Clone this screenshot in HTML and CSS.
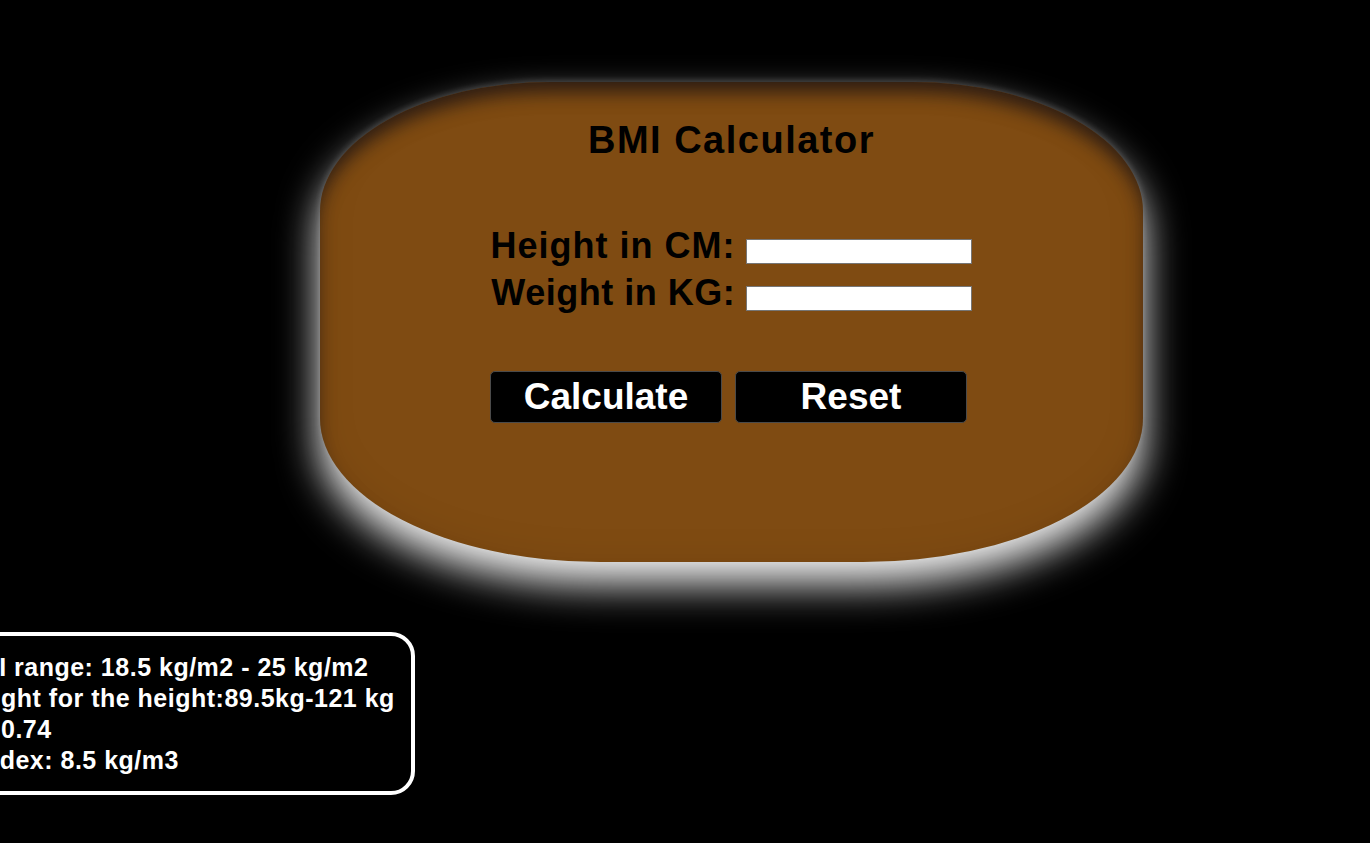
FILE: index.html
```html
<!DOCTYPE html>
<html lang="en">
<head>
    <meta charset="UTF-8">
    <meta name="viewport" content="width=device-width, initial-scale=1.0">
    <title>BMI Calculator</title>
    <link rel="stylesheet" href="styles.css">
</head>
<body>
    <div class="card">
        <h1>BMI Calculator</h1>
        <form id="bmiForm">
            <div class="row">
                <label for="height">Height in CM:</label>
                <input type="number" id="height">
            </div>
            <div class="row row-weight">
                <label for="weight">Weight in KG:</label>
                <input type="number" id="weight">
            </div>
            <div class="buttons">
                <button type="button" id="calculate">Calculate</button>
                <button type="reset" id="reset">Reset</button>
            </div>
        </form>
    </div>

    <div class="result" id="result">
        <div>Healthy BMI range: 18.5 kg/m2 - 25 kg/m2</div>
        <div>Healthy weight for the height:89.5kg-121 kg</div>
        <div>BMI Prime: 0.74</div>
        <div>Ponderal Index: 8.5 kg/m3</div>
    </div>

    <script>
        const calculate = document.getElementById('calculate');
        const result = document.getElementById('result');

        // Work out BMI, prime and ponderal index
        calculate.addEventListener('click', () => {
            const height = parseFloat(document.getElementById('height').value) / 100;
            const weight = parseFloat(document.getElementById('weight').value);

            if (!height || !weight) {
                alert('Please enter height and weight.');
                return;
            }

            const bmi = weight / (height * height);
            const low = (18.5 * height * height).toFixed(1);
            const high = (25 * height * height).toFixed(1);

            result.innerHTML = `
                <div>Healthy BMI range: 18.5 kg/m2 - 25 kg/m2</div>
                <div>Healthy weight for the height:${low}kg-${high} kg</div>
                <div>BMI Prime: ${(bmi / 25).toFixed(2)}</div>
                <div>Ponderal Index: ${(weight / (height * height * height)).toFixed(1)} kg/m3</div>
            `;
        });
    </script>
</body>
</html>
```

FILE: styles.css
```css
body {
    margin: 0;
    background-color: #000;
    font-family: "Liberation Sans", Arial, sans-serif;
    overflow: hidden;
}

.card {
    width: 823px;
    height: 480px;
    margin: 82px 0 0 320px;
    padding-top: 35px;
    box-sizing: border-box;
    background-color: #7f4b12;
    border-radius: 28% 28% 34% 34% / 27% 27% 30% 30%;
    box-shadow: 0 22px 40px rgba(255, 255, 255, 0.95),
                0 -2px 6px rgba(120, 120, 120, 0.35),
                inset 0 14px 18px -4px rgba(20, 15, 20, 0.75),
                inset 0 0 40px rgba(0, 0, 0, 0.08);
    text-align: center;
}

h1 {
    margin: 0;
    font-size: 38px;
    line-height: 46px;
    letter-spacing: 1.5px;
    color: #000;
}

form {
    margin-top: 59px;
}

.row {
    font-size: 36px;
    line-height: 47px;
    font-weight: bold;
    letter-spacing: 1px;
    color: #000;
}

.row-weight {
    letter-spacing: 0.5px;
}

.row input {
    width: 226px;
    height: 25px;
    box-sizing: border-box;
    border: 1px solid #767676;
    background-color: #fff;
    font-size: 13px;
    letter-spacing: 0;
    vertical-align: 2px;
}

.buttons {
    display: flex;
    justify-content: center;
    gap: 13px;
    margin-top: 55px;
    padding-right: 6px;
}

.buttons button {
    width: 232px;
    height: 52px;
    padding: 0;
    background-color: #000;
    color: #fff;
    border: 1px solid #4a4a4a;
    border-radius: 5px;
    font-family: "Liberation Sans", Arial, sans-serif;
    font-size: 37px;
    font-weight: bold;
    cursor: pointer;
}

.result {
    display: inline-block;
    margin: 70px 0 0 -162px;
    padding: 16px 16px 15px 16px;
    border: 4px solid #fff;
    border-radius: 24px;
    color: #fff;
    font-size: 25px;
    line-height: 31px;
    font-weight: bold;
    letter-spacing: 0.5px;
    white-space: nowrap;
}
```
